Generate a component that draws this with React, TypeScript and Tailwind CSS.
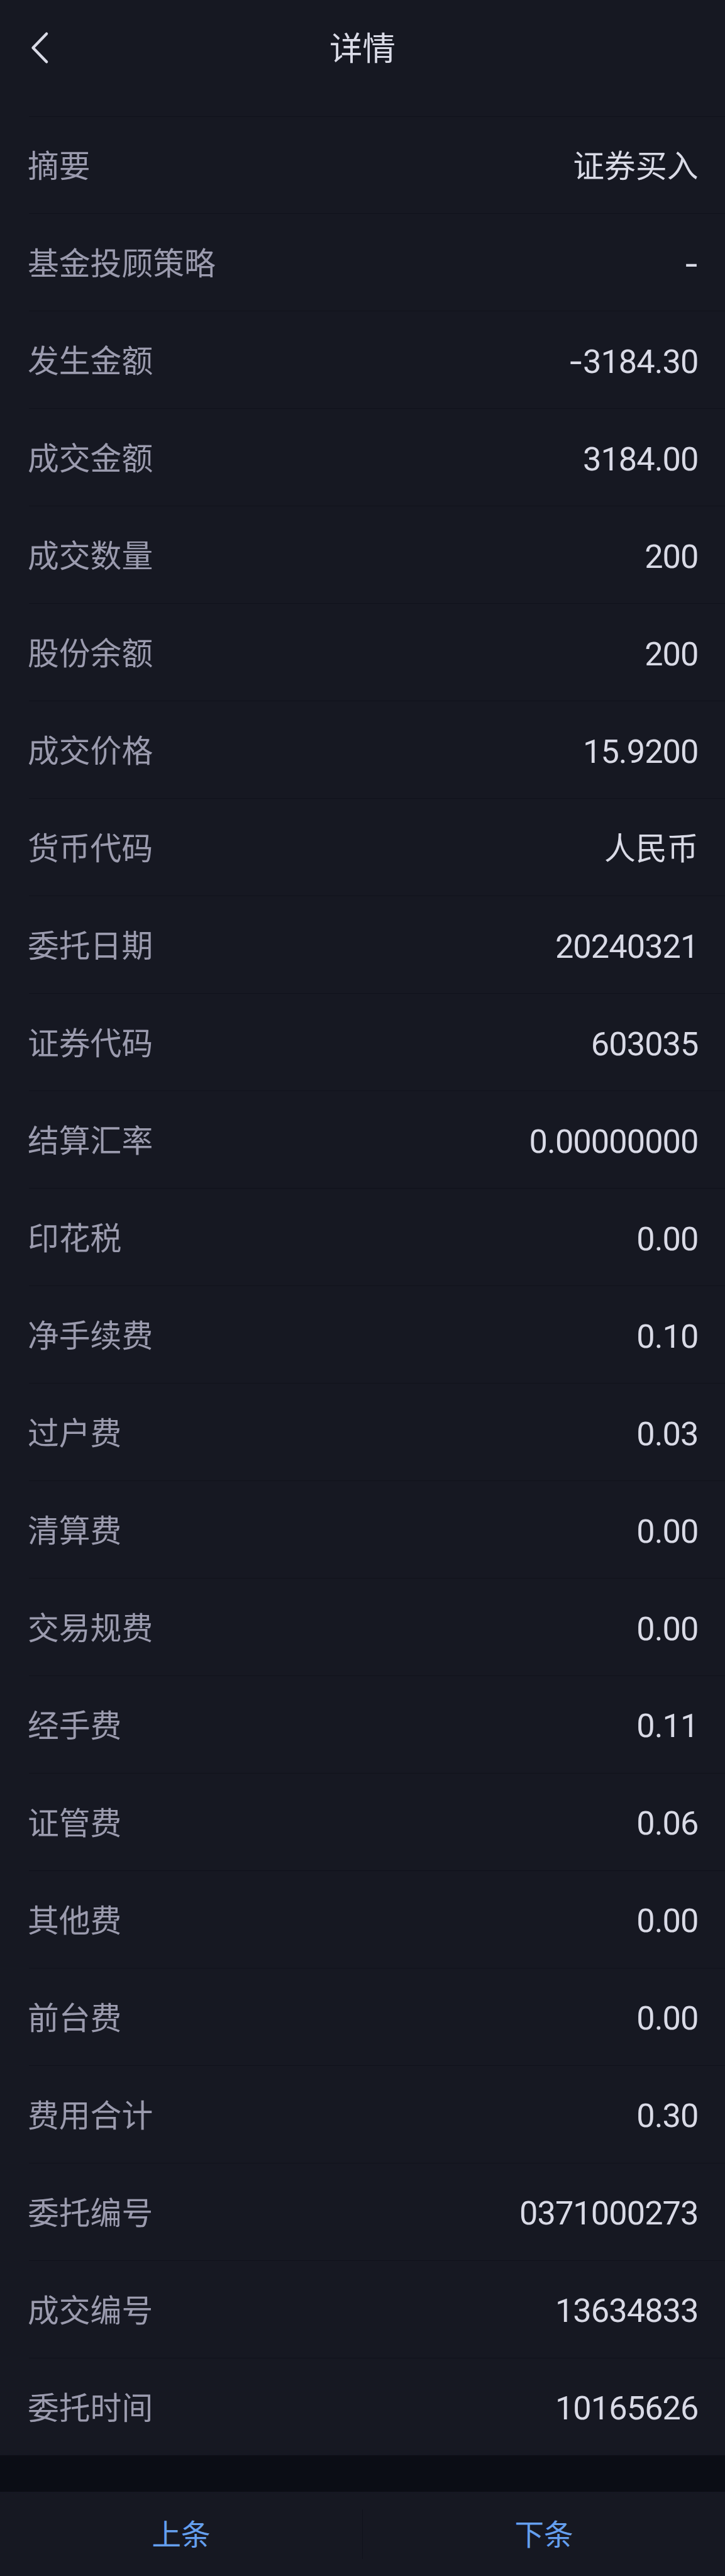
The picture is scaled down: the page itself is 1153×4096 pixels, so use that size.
const rows = [
  { label: '摘要', value: '证券买入' },
  { label: '基金投顾策略', value: '-' },
  { label: '发生金额', value: '-3184.30' },
  { label: '成交金额', value: '3184.00' },
  { label: '成交数量', value: '200' },
  { label: '股份余额', value: '200' },
  { label: '成交价格', value: '15.9200' },
  { label: '货币代码', value: '人民币' },
  { label: '委托日期', value: '20240321' },
  { label: '证券代码', value: '603035' },
  { label: '结算汇率', value: '0.00000000' },
  { label: '印花税', value: '0.00' },
  { label: '净手续费', value: '0.10' },
  { label: '过户费', value: '0.03' },
  { label: '清算费', value: '0.00' },
  { label: '交易规费', value: '0.00' },
  { label: '经手费', value: '0.11' },
  { label: '证管费', value: '0.06' },
  { label: '其他费', value: '0.00' },
  { label: '前台费', value: '0.00' },
  { label: '费用合计', value: '0.30' },
  { label: '委托编号', value: '0371000273' },
  { label: '成交编号', value: '13634833' },
  { label: '委托时间', value: '10165626' },
]

const isNumeric = (value: string) => /^[-\d.]+$/.test(value)

const Header = () => (
  <header className="grid h-[184.5px] grid-cols-[1fr_auto_1fr] items-start pt-[36px]">
    <button type="button" aria-label="返回" className="flex h-20 items-center pl-[46px]">
      <svg width="34" height="56" viewBox="0 0 34 56" fill="none">
        <path
          d="M28 5.7 L6.5 28 L28 50.3"
          stroke="#d9dae6"
          strokeWidth="4.5"
          strokeLinecap="round"
          strokeLinejoin="round"
        />
      </svg>
    </button>
    <h1 className="-mt-[3px] h-20 text-[52.5px] leading-[80px] text-[#d9dae6]">详情</h1>
  </header>
)

// The minus sign comes from Inter, its hyphen is wider than Roboto's
const Amount = ({ value }: { value: string }) => (
  <span className="mt-[9px] font-[Roboto,sans-serif] text-[52.3px] tracking-[-0.94px] text-[#d9dae6]">
    {value.startsWith('-') && <span className="font-[Inter,sans-serif]">-</span>}
    {value.replace('-', '')}
  </span>
)

const Row = ({ label, value }: { label: string; value: string }) => (
  <li className="ml-[46px] h-[154.975px] border-t border-[#10121b]">
    <div className="-ml-[2px] flex h-full items-center justify-between pr-[42.5px] pb-1 text-[49.8px] leading-[80px]">
      <span className="text-[#9b9bae]">{label}</span>
      {isNumeric(value) ? <Amount value={value} /> : <span className="text-[#d9dae6]">{value}</span>}
    </div>
  </li>
)

const Footer = () => (
  <footer className="flex h-[133.5px] items-center bg-[#161822] text-[46.6px] text-[#659fee]">
    <button type="button" className="flex-1 pb-[5px]">
      上条
    </button>
    <span className="h-[79px] w-px bg-[#10121b]" />
    <button type="button" className="flex-1 pb-[5px]">
      下条
    </button>
  </footer>
)

export default function App() {
  return (
    <main className="h-[4096px] w-[1153px] overflow-hidden bg-[#0b0d15] font-['Noto_Sans_CJK_SC',sans-serif]">
      <div className="bg-[#161822]">
        <Header />
        <ul>
          {rows.map((row) => (
            <Row key={row.label} label={row.label} value={row.value} />
          ))}
        </ul>
      </div>
      <div className="h-[58.6px]" />
      <Footer />
    </main>
  )
}
